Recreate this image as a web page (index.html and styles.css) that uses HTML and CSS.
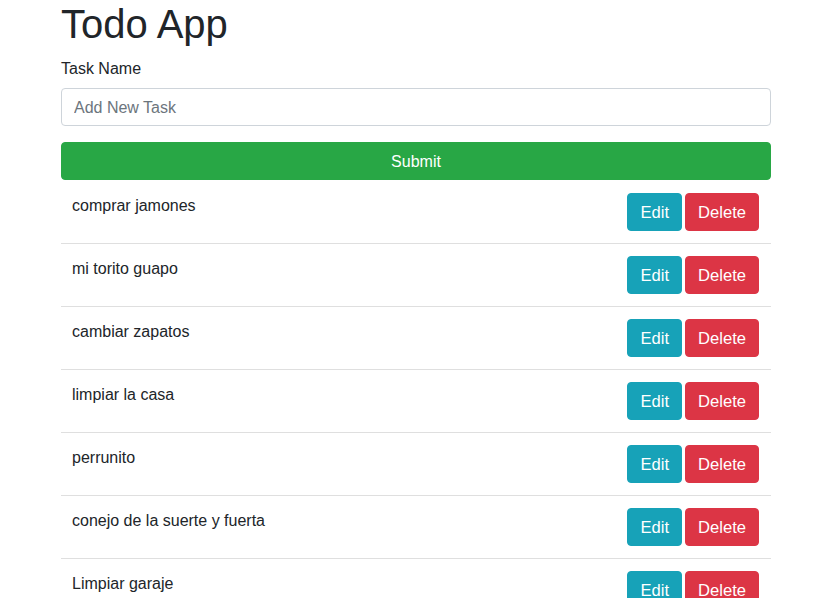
FILE: index.html
```html
<!DOCTYPE html>
<html lang="es">
<head>
<meta charset="utf-8">
<title>Todo App</title>
<link rel="stylesheet" href="styles.css">
</head>
<body>
<div class="container">
  <h1 class="title">Todo App</h1>
  <form class="task-form">
    <div class="form-group">
      <label class="label" for="task">Task Name</label>
      <input class="input" id="task" type="text" placeholder="Add New Task">
    </div>
    <button type="button" class="btn btn-success btn-block">Submit</button>
  </form>
  <ul class="list">
    <li class="item"><span class="item-text">comprar jamones</span><span class="actions"><button class="btn btn-info">Edit</button><button class="btn btn-danger">Delete</button></span></li>
    <li class="item"><span class="item-text">mi torito guapo</span><span class="actions"><button class="btn btn-info">Edit</button><button class="btn btn-danger">Delete</button></span></li>
    <li class="item"><span class="item-text">cambiar zapatos</span><span class="actions"><button class="btn btn-info">Edit</button><button class="btn btn-danger">Delete</button></span></li>
    <li class="item"><span class="item-text">limpiar la casa</span><span class="actions"><button class="btn btn-info">Edit</button><button class="btn btn-danger">Delete</button></span></li>
    <li class="item"><span class="item-text">perrunito</span><span class="actions"><button class="btn btn-info">Edit</button><button class="btn btn-danger">Delete</button></span></li>
    <li class="item"><span class="item-text">conejo de la suerte y fuerta</span><span class="actions"><button class="btn btn-info">Edit</button><button class="btn btn-danger">Delete</button></span></li>
    <li class="item"><span class="item-text">Limpiar garaje</span><span class="actions"><button class="btn btn-info">Edit</button><button class="btn btn-danger">Delete</button></span></li>
  </ul>
</div>
</body>
</html>
```
FILE: styles.css
```css
* { box-sizing: border-box; }
html, body { margin: 0; padding: 0; }
body {
  font-family: "Liberation Sans", Arial, sans-serif;
  font-size: 16px;
  line-height: 1.5;
  color: #212529;
  background: #fff;
}
.container {
  width: 710px;
  margin-left: 61px;
}
.title {
  margin: 0 0 8px;
  font-size: 40px;
  font-weight: 500;
  line-height: 1.2;
}
.task-form { margin: 0; }
.form-group { margin-bottom: 16px; }
.label {
  display: block;
  padding-top: 1px;
  margin-bottom: 7px;
}
.input {
  display: block;
  width: 100%;
  height: 38px;
  padding: 7px 12px 5px;
  font-family: inherit;
  font-size: 16px;
  line-height: 1.5;
  color: #495057;
  background: #fff;
  border: 1px solid #ced4da;
  border-radius: 4px;
  outline: none;
}
.input::placeholder { color: #6c757d; opacity: 1; }
.btn {
  display: inline-block;
  font-family: inherit;
  font-size: 16.6px;
  line-height: 24px;
  height: 38px;
  padding: 7px 12px 5px;
  border: 1px solid transparent;
  border-radius: 4px;
  color: #fff;
  cursor: pointer;
}
.btn-block { display: block; width: 100%; font-size: 16px; }
.btn-success { background: #28a745; border-color: #28a745; }
.btn-info { background: #17a2b8; border-color: #17a2b8; }
.btn-danger { background: #dc3545; border-color: #dc3545; }
.list {
  list-style: none;
  margin: 1px 0 0;
  padding: 0;
}
.item {
  display: flex;
  justify-content: space-between;
  align-items: flex-start;
  padding: 12px 12px 12px 11px;
  border-bottom: 1px solid #dfdfdf;
}
.item-text { padding-top: 1px; }
.actions { display: flex; gap: 3px; }
```
